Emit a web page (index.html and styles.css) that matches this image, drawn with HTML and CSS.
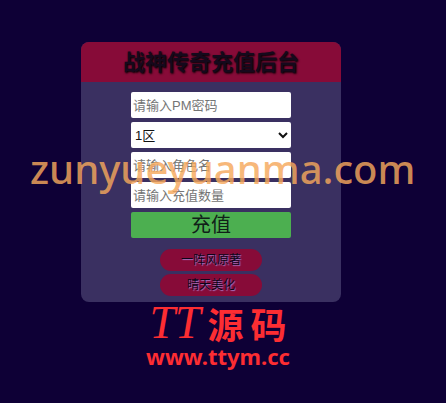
FILE: index.html
```html
<!DOCTYPE html>
<html lang="zh-CN">
<head>
<meta charset="utf-8">
<meta name="viewport" content="width=device-width, initial-scale=1">
<title>战神传奇充值后台</title>
<link rel="stylesheet" href="styles.css">
</head>
<body>
<main class="page">
  <form class="card">
    <h1 class="card-title">战神传奇充值后台</h1>
    <div class="fields">
      <input class="field" type="password" placeholder="请输入PM密码" aria-label="PM密码">
      <select class="field" aria-label="分区"><option>1区</option></select>
      <input class="field" type="text" placeholder="请输入角色名" aria-label="角色名">
      <input class="field" type="text" placeholder="请输入充值数量" aria-label="充值数量">
      <button class="submit" type="button">充值</button>
    </div>
    <div class="credits">
      <a class="credit" href="#">一阵风原著</a>
      <a class="credit" href="#">晴天美化</a>
    </div>
    <div class="watermark">zunyueyuanma.com</div>
  </form>
  <footer class="brand">
    <div class="brand-name"><span class="brand-latin">TT</span><span class="brand-han">源</span><span class="brand-han">码</span></div>
    <div class="brand-url">www.ttym.cc</div>
  </footer>
</main>
</body>
</html>
```
FILE: styles.css
```css
* {
  box-sizing: border-box;
}

body {
  margin: 0;
  min-height: 100vh;
  background: #0e0036;
  font-family: "Liberation Sans", "Noto Sans CJK SC", sans-serif;
}

.page {
  display: flex;
  flex-direction: column;
  align-items: center;
  padding: 42px 24px 0 0;
}

.card {
  position: relative;
  width: 260px;
  padding-bottom: 6px;
  border-radius: 8px;
  background: #3a3061;
}

.card-title {
  margin: 0;
  border-radius: 8px 8px 0 0;
  background: #870b38;
  color: #15091c;
  font-size: 22px;
  line-height: 42px;
  height: 40px;
  text-align: center;
  text-shadow: 1px 1px 2px #000;
}

.fields {
  display: flex;
  flex-direction: column;
  gap: 4px;
  width: 160px;
  margin: 10px auto 11px;
}

.field,
.submit {
  width: 100%;
  height: 26px;
  margin: 0;
  border: 0;
  border-radius: 2px;
  font-family: inherit;
}

.field {
  padding: 0 2px;
  background: #fff;
  color: #111;
  font-size: 13px;
}

select.field {
  padding: 0;
}

.field::placeholder {
  color: #757575;
}

.submit {
  padding: 0;
  background: #4caf50;
  color: #102018;
  font-size: 20px;
  line-height: 26px;
}

.credits {
  display: flex;
  flex-direction: column;
  align-items: center;
  gap: 3px;
}

.credit {
  width: 102px;
  border-radius: 11px;
  background: #870b38;
  color: #0c0418;
  font-size: 12px;
  line-height: 22px;
  text-align: center;
  text-decoration: none;
  text-shadow: 1px 1px 1px #a878c8;
}

.watermark {
  position: absolute;
  top: 99px;
  left: -51px;
  color: rgba(246, 168, 92, 0.82);
  font-family: "Noto Sans", sans-serif;
  font-size: 40px;
  font-weight: 500;
  line-height: 56px;
  white-space: nowrap;
  pointer-events: none;
}

.brand {
  padding: 0 0 0 14px;
  color: #fc2d32;
  text-align: center;
}

.brand-name {
  display: flex;
  justify-content: center;
  align-items: center;
  gap: 7px;
  line-height: 42px;
}

.brand-latin {
  font-family: "Liberation Serif", serif;
  font-size: 46px;
  font-style: italic;
}

.brand-han {
  font-family: "Noto Sans CJK SC", sans-serif;
  font-size: 36px;
  font-weight: 700;
}

.brand-url {
  font-family: "Noto Sans", sans-serif;
  font-size: 22px;
  font-weight: 700;
  line-height: 24px;
}
```
